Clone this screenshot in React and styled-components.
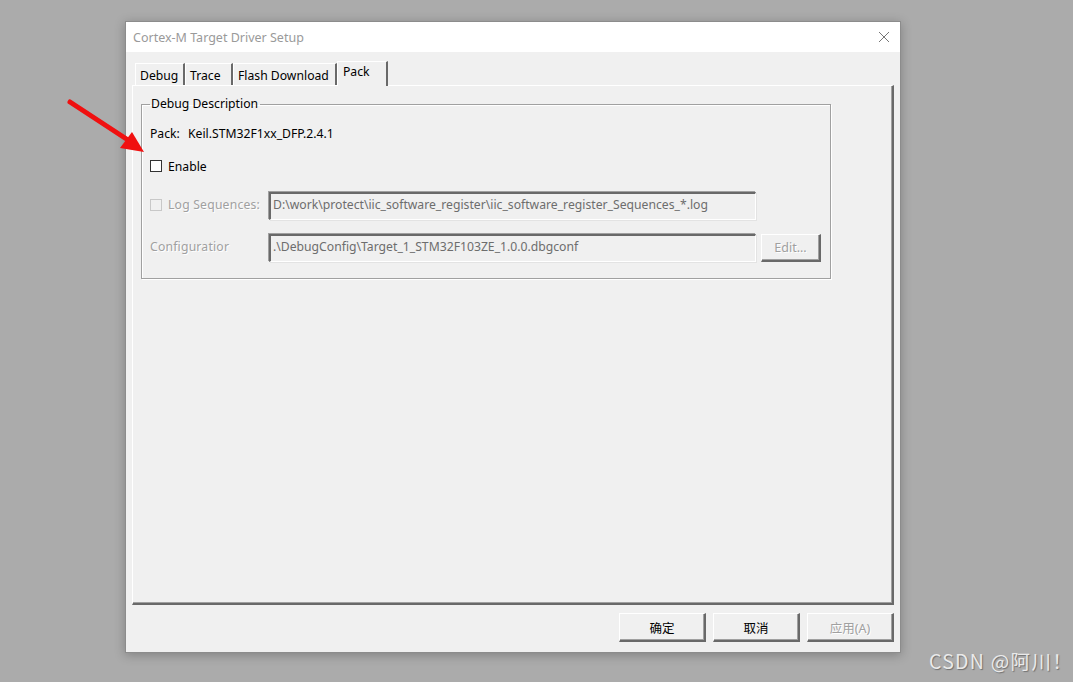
import React from 'react';
import styled, { createGlobalStyle } from 'styled-components';

const GlobalStyle = createGlobalStyle`
  html, body {
    margin: 0;
    padding: 0;
    background: #ababab;
  }
  body {
    width: 1073px;
    height: 682px;
    overflow: hidden;
    font-family: "Noto Sans", "Noto Sans CJK SC", sans-serif;
    font-size: 12.2px;
  }
`;

const Desk = styled.div`
  position: relative;
  width: 1073px;
  height: 682px;
  padding: 21px 0 0 125px;
  box-sizing: border-box;
`;

const Window = styled.div`
  width: 776px;
  height: 632px;
  box-sizing: border-box;
  border: 1px solid #8c8c8c;
  background: #f0f0f0;
  display: flex;
  flex-direction: column;
  box-shadow: 0 2px 10px rgba(0, 0, 0, 0.25);
`;

const TitleBar = styled.div`
  height: 30px;
  background: #fff;
  display: flex;
  align-items: center;
  justify-content: space-between;
  padding: 0 10px 0 7px;
  color: #9a9a9a;
  font-size: 12.5px;
`;

const Body = styled.div`
  flex: 1;
  display: flex;
  flex-direction: column;
  padding: 8px 6px 10px 6px;
`;

const TabRow = styled.div`
  display: flex;
  align-items: flex-end;
  height: 25px;
  padding-left: 3px;
  position: relative;
  z-index: 1;
`;

const Tab = styled.div`
  width: ${(p) => p.w}px;
  height: ${(p) => (p.active ? '25px' : '22px')};
  box-sizing: border-box;
  padding: ${(p) => (p.active ? '1px 0 0 5px' : '3px 0 0 4px')};
  margin-bottom: ${(p) => (p.active ? '-1px' : '0')};
  border-top: 1px solid #fff;
  border-left: 1px solid #fff;
  border-right: 2px solid #696969;
  background: #f0f0f0;
  color: #000;
  line-height: 17px;
  white-space: nowrap;
`;

const Panel = styled.div`
  flex: 1;
  border-top: 1px solid #fff;
  border-left: 1px solid #fff;
  border-right: 2px solid #696969;
  border-bottom: 2px solid #696969;
  box-shadow: inset -1px -1px 0 #a0a0a0;
  padding: 9px 0 0 8px;
`;

const Group = styled.fieldset`
  width: 690px;
  height: 184px;
  box-sizing: border-box;
  margin: 0;
  padding: 0 0 0 8px;
  border: 1px solid #a0a0a0;
  box-shadow: 1px 1px 0 #fff, inset 1px 1px 0 #fff;
  color: #000;

  legend {
    padding: 0 2px 0 1px;
    margin-left: 0;
    line-height: 18px;
  }
`;

const Row = styled.div`
  display: flex;
  align-items: center;
  height: ${(p) => p.h || 20}px;
  margin-top: ${(p) => p.mt || 0}px;
  color: ${(p) => (p.dim ? '#a0a0a0' : '#000')};
`;

const Box = styled.span`
  width: 12px;
  height: 12px;
  box-sizing: border-box;
  border: 1px solid ${(p) => (p.dim ? '#c8c8c8' : '#333')};
  background: ${(p) => (p.dim ? '#f0f0f0' : '#fff')};
  margin-right: 6px;
  margin-top: ${(p) => p.mt || 0}px;
`;

const Label = styled.span`
  width: ${(p) => p.w || 'auto'};
  flex-shrink: 0;
  letter-spacing: ${(p) => (p.dim ? '0.2px' : 'normal')};
  text-shadow: ${(p) => (p.dim ? '1px 1px 0 #fff' : 'none')};
  margin-top: ${(p) => p.mt || 0}px;
`;

const Field = styled.div`
  width: 487px;
  height: 28px;
  box-sizing: border-box;
  border-top: 2px solid #696969;
  border-left: 2px solid #696969;
  border-right: 1px solid #fff;
  border-bottom: 1px solid #fff;
  box-shadow: -1px -1px 0 #a0a0a0, 1px 1px 0 #e3e3e3;
  background: #f0f0f0;
  color: #6d6d6d;
  padding: 2px 0 0 2px;
  line-height: 17px;
  white-space: nowrap;
  overflow: hidden;
`;

const Button = styled.div`
  width: ${(p) => p.w || 87}px;
  height: ${(p) => p.h || 29}px;
  box-sizing: border-box;
  display: flex;
  align-items: center;
  justify-content: center;
  border-top: 1px solid #fff;
  border-left: 1px solid #fff;
  border-right: 2px solid #696969;
  border-bottom: 2px solid #696969;
  box-shadow: inset -1px -1px 0 #a0a0a0;
  background: #f0f0f0;
  color: ${(p) => (p.dim ? '#a0a0a0' : '#000')};
  text-shadow: ${(p) => (p.dim ? '1px 1px 0 #fff' : 'none')};
  font-size: 12.5px;
`;

const Buttons = styled.div`
  display: flex;
  justify-content: flex-end;
  gap: 7px;
  padding: 8px 0 0 0;
`;

const Arrow = styled.svg`
  position: absolute;
  left: 64px;
  top: 96px;
`;

const Watermark = styled.div`
  position: absolute;
  right: 0;
  bottom: 7px;
  color: #eaeaea;
  font-family: "Noto Sans CJK SC", sans-serif;
  font-size: 19.5px;
  letter-spacing: 1.3px;
  text-shadow: 1px 1px 1px rgba(0, 0, 0, 0.35);
`;

export default function App() {
  return (
    <>
      <GlobalStyle />
      <Desk>
        <Window>
          <TitleBar>
            <span>Cortex-M Target Driver Setup</span>
            <svg width="12" height="12" viewBox="0 0 12 12">
              <path d="M1 1 L11 11 M11 1 L1 11" stroke="#777" strokeWidth="1" />
            </svg>
          </TitleBar>
          <Body>
            <TabRow>
              <Tab w={50}>Debug</Tab>
              <Tab w={48}>Trace</Tab>
              <Tab w={104}>Flash Download</Tab>
              <Tab w={51} active>Pack</Tab>
            </TabRow>
            <Panel>
              <Group>
                <legend>Debug Description</legend>
                <Row h={20} mt={10}>
                  <Label w="38px">Pack:</Label>
                  <span>Keil.STM32F1xx_DFP.2.4.1</span>
                </Row>
                <Row h={20} mt={13}>
                  <Box />
                  <Label>Enable</Label>
                </Row>
                <Row h={28} mt={16} dim>
                  <Box dim mt={-3} />
                  <Label dim w="101px" mt={-4}>Log Sequences:</Label>
                  <Field>D:\work\protect\iic_software_register\iic_software_register_Sequences_*.log</Field>
                </Row>
                <Row h={28} mt={14} dim>
                  <Label dim w="119px" mt={-4}>Configuratior</Label>
                  <Field>.\DebugConfig\Target_1_STM32F103ZE_1.0.0.dbgconf</Field>
                  <Button dim w={60} h={28} style={{ marginLeft: 5 }}>Edit...</Button>
                </Row>
              </Group>
            </Panel>
            <Buttons>
              <Button>确定</Button>
              <Button>取消</Button>
              <Button dim>应用(A)</Button>
            </Buttons>
          </Body>
        </Window>
        <Arrow width="84" height="64" viewBox="0 0 84 64">
          <line x1="6" y1="6" x2="64" y2="44" stroke="#f01010" strokeWidth="5" strokeLinecap="round" />
          <polygon points="80,56 56,52 68,36" fill="#f01010" />
        </Arrow>
        <Watermark>CSDN @阿川！</Watermark>
      </Desk>
    </>
  );
}
